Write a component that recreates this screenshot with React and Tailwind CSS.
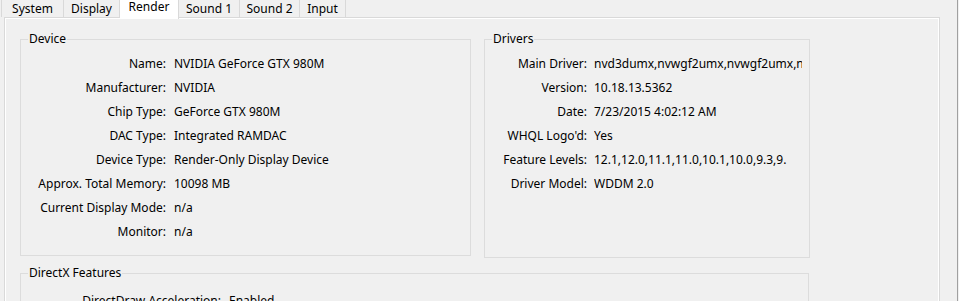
const tabs = [
  { label: "System", w: "w-[63px] border-l" },
  { label: "Display", w: "w-[56px]" },
  { label: "Render", w: "w-[59px]", active: true },
  { label: "Sound 1", w: "w-[61px]" },
  { label: "Sound 2", w: "w-[60px]" },
  { label: "Input", w: "w-[46px]" },
];

const device = [
  ["Name:", "NVIDIA GeForce GTX 980M"],
  ["Manufacturer:", "NVIDIA"],
  ["Chip Type:", "GeForce GTX 980M"],
  ["DAC Type:", "Integrated RAMDAC"],
  ["Device Type:", "Render-Only Display Device"],
  ["Approx. Total Memory:", "10098 MB"],
  ["Current Display Mode:", "n/a"],
  ["Monitor:", "n/a"],
];

const drivers = [
  ["Main Driver:", "nvd3dumx,nvwgf2umx,nvwgf2umx,n"],
  ["Version:", "10.18.13.5362"],
  ["Date:", "7/23/2015 4:02:12 AM"],
  ["WHQL Logo'd:", "Yes"],
  ["Feature Levels:", "12.1,12.0,11.1,11.0,10.1,10.0,9.3,9."],
  ["Driver Model:", "WDDM 2.0"],
];

const features = [
  ["DirectDraw Acceleration:", "Enabled"],
  ["Direct3D Acceleration:", "Enabled"],
  ["AGP Texture Acceleration:", "Enabled"],
];

function Group({ title, className, children }) {
  return (
    <fieldset className={`border border-[#dcdcdc] shrink-0 ${className}`}>
      <legend className="ml-[7px] px-[1px] leading-[16px]">{title}</legend>
      {children}
    </fieldset>
  );
}

function Rows({ rows, cols, pt }) {
  return (
    <div className={`grid ${cols} ${pt}`}>
      {rows.map(([k, v]) => (
        <div key={k} className="contents">
          <div className="text-right leading-[24px] whitespace-nowrap">{k}</div>
          <div className="leading-[24px] whitespace-nowrap overflow-hidden">{v}</div>
        </div>
      ))}
    </div>
  );
}

export default function App() {
  return (
    <div className="w-[959px] h-[301px] overflow-hidden bg-[#f0f0f0] flex text-[12px] text-black font-['Noto_Sans',sans-serif]">
      <div className="w-[957px] flex flex-col shrink-0">
        <div className="relative z-10 flex items-start h-[17px] pl-[1px]">
          {tabs.map((t) => (
            <div
              key={t.label}
              className={`${t.w} shrink-0 border-r border-[#d9d9d9] text-center whitespace-nowrap ${
                t.active ? "h-[19px] bg-white leading-[13px]" : "h-[17px] leading-[17px]"
              }`}
            >
              {t.label}
            </div>
          ))}
        </div>
        <div className="ml-[4px] w-[936px] flex-1 border-x border-t border-[#d9d9d9] shadow-[inset_1px_1px_0_#ffffff,inset_-1px_0_0_#ffffff] pl-[15px] pt-[13px]">
          <div className="flex items-start gap-[13px]">
            <Group title="Device" className="w-[451px] h-[225px]">
              <Rows rows={device} cols="grid-cols-[145px_1fr] gap-x-[8px]" pt="pt-[5px]" />
            </Group>
            <Group title="Drivers" className="w-[326px] h-[227px]">
              <Rows rows={drivers} cols="grid-cols-[102px_208px] gap-x-[7px]" pt="pt-[5px]" />
            </Group>
          </div>
          <Group title="DirectX Features" className="mt-[7px] w-[789px] h-[120px]">
            <Rows rows={features} cols="grid-cols-[200px_1fr] gap-x-[8px]" pt="pt-[8px]" />
          </Group>
        </div>
      </div>
      <div className="w-[1px] bg-[#a0a0a0] shrink-0" />
      <div className="w-[1px] bg-[#f0f0f0] shrink-0" />
    </div>
  );
}
